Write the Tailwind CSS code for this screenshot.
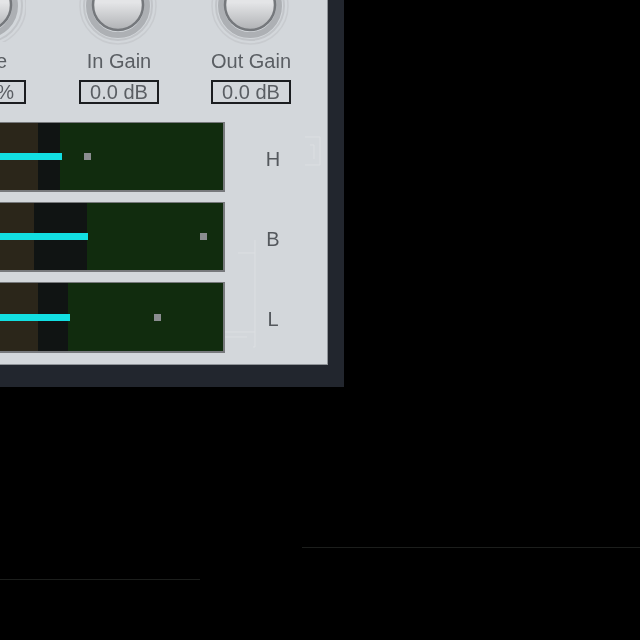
<!doctype html>
<html>
<head>
<meta charset="utf-8">
<script src="https://cdn.jsdelivr.net/npm/@tailwindcss/browser@4"></script>
</head>
<body class="m-0 bg-black">
<div class="relative w-[640px] h-[640px] overflow-hidden bg-black font-['Liberation_Sans',sans-serif]">
  <div class="w-[344px] h-[387px] bg-[#22262e] pr-[16px] pb-[21px]">
    <div class="relative w-[328px] h-[365px] bg-[#d3d7db] border-r border-b border-[#8f9398] overflow-hidden">
      <svg class="absolute left-0 top-0" width="328" height="365" viewBox="0 0 328 365" fill="none" stroke="#dcdfe2" stroke-width="1"><path d="M305 137h15v28h-15M310 145h4v14"/><path d="M238 253h17M255 240v107h-2M225 332h30M225 337h22"/></svg>
      <div class="relative flex h-[122px] blur-[0.5px]">
        <div class="w-[26px] relative overflow-hidden">
          <svg class="absolute left-0 top-0" width="26" height="42" viewBox="0 0 26 42"><defs><linearGradient id="k0" x1="0" y1="0" x2="0" y2="1"><stop offset="0.45" stop-color="#e4e5e7"/><stop offset="1" stop-color="#b0b2b5"/></linearGradient></defs><circle cx="-14" cy="6" r="40" fill="none" stroke="#c8cbcf" stroke-width="1.5"/><circle cx="-14" cy="6" r="36" fill="none" stroke="#c2c5c9" stroke-width="2"/><circle cx="-14" cy="6" r="29" fill="none" stroke="#adb0b4" stroke-width="6"/><circle cx="-14" cy="5" r="25" fill="url(#k0)" stroke="#75787c" stroke-width="2.5"/></svg>
          <span class="absolute right-[19px] top-[50px] text-[#5a5e63] text-[20px] leading-[22px]">e</span>
          <div class="absolute left-[-40px] top-[80px] w-[66px] h-[24px] border-2 border-[#1b1d20] text-right pr-[10px] text-[#5a5e63] text-[20px] leading-[20px]">%</div>
        </div>
        <div class="ml-[53px] w-[80px] flex flex-col items-center">
          <svg class="overflow-visible" width="80" height="40" viewBox="0 0 80 40"><defs><linearGradient id="k1" x1="0" y1="0" x2="0" y2="1"><stop offset="0.45" stop-color="#e4e5e7"/><stop offset="1" stop-color="#b0b2b5"/></linearGradient></defs><circle cx="39" cy="6" r="38" fill="none" stroke="#c8cbcf" stroke-width="1.5"/><circle cx="39" cy="6" r="34" fill="none" stroke="#c2c5c9" stroke-width="2"/><circle cx="39" cy="6" r="29" fill="none" stroke="#adb0b4" stroke-width="6"/><circle cx="39" cy="5" r="25" fill="url(#k1)" stroke="#75787c" stroke-width="2.5"/></svg>
          <div class="mt-[10px] text-[#5a5e63] text-[20px] leading-[22px] whitespace-nowrap">In Gain</div>
          <div class="mt-[8px] w-[80px] h-[24px] border-2 border-[#1b1d20] flex items-center justify-center text-[#5a5e63] text-[20px] leading-[20px]">0.0 dB</div>
        </div>
        <div class="ml-[52px] w-[80px] flex flex-col items-center">
          <svg class="overflow-visible" width="80" height="40" viewBox="0 0 80 40"><defs><linearGradient id="k2" x1="0" y1="0" x2="0" y2="1"><stop offset="0.45" stop-color="#e4e5e7"/><stop offset="1" stop-color="#b0b2b5"/></linearGradient></defs><circle cx="39" cy="6" r="38" fill="none" stroke="#c8cbcf" stroke-width="1.5"/><circle cx="39" cy="6" r="34" fill="none" stroke="#c2c5c9" stroke-width="2"/><circle cx="39" cy="6" r="29" fill="none" stroke="#adb0b4" stroke-width="6"/><circle cx="39" cy="5" r="25" fill="url(#k2)" stroke="#75787c" stroke-width="2.5"/></svg>
          <div class="mt-[10px] text-[#5a5e63] text-[20px] leading-[22px] whitespace-nowrap">Out Gain</div>
          <div class="mt-[8px] w-[80px] h-[24px] border-2 border-[#1b1d20] flex items-center justify-center text-[#5a5e63] text-[20px] leading-[20px]">0.0 dB</div>
        </div>
      </div>
      <div class="relative flex flex-col gap-[10px]">
        <div class="flex items-center">
          <div class="relative w-[225px] h-[70px] bg-[#112c0e] border-r-2 border-b-2 border-t border-[#77797c] flex">
            <div class="w-[38px] bg-[#2b261a]"></div><div class="w-[22px] bg-[#101413]"></div>
            <div class="absolute left-0 top-[30px] w-[62px] h-[7px] bg-[#12dfe2]"></div>
            <div class="absolute left-[84px] top-[30px] w-[7px] h-[7px] bg-[#8b8d90]"></div>
          </div>
          <div class="w-[96px] pt-[3px] text-center text-[#54585d] text-[20px] blur-[0.5px]">H</div>
        </div>
        <div class="flex items-center">
          <div class="relative w-[225px] h-[70px] bg-[#112c0e] border-r-2 border-b-2 border-t border-[#77797c] flex">
            <div class="w-[34px] bg-[#2b261a]"></div><div class="w-[53px] bg-[#101413]"></div>
            <div class="absolute left-0 top-[30px] w-[88px] h-[7px] bg-[#12dfe2]"></div>
            <div class="absolute left-[200px] top-[30px] w-[7px] h-[7px] bg-[#8b8d90]"></div>
          </div>
          <div class="w-[96px] pt-[3px] text-center text-[#54585d] text-[20px] blur-[0.5px]">B</div>
        </div>
        <div class="flex items-center">
          <div class="relative w-[225px] h-[71px] bg-[#112c0e] border-r-2 border-b-2 border-t border-[#77797c] flex">
            <div class="w-[38px] bg-[#2b261a]"></div><div class="w-[30px] bg-[#101413]"></div>
            <div class="absolute left-0 top-[31px] w-[70px] h-[7px] bg-[#12dfe2]"></div>
            <div class="absolute left-[154px] top-[31px] w-[7px] h-[7px] bg-[#8b8d90]"></div>
          </div>
          <div class="w-[96px] pt-[3px] text-center text-[#54585d] text-[20px] blur-[0.5px]">L</div>
        </div>
      </div>
    </div>
  </div>
  <div class="absolute left-0 top-[579px] w-[200px] h-px bg-[#1c1e1c]"></div>
  <div class="absolute left-[302px] top-[547px] w-[338px] h-px bg-[#1c1e1c]"></div>
</div>
</body>
</html>
